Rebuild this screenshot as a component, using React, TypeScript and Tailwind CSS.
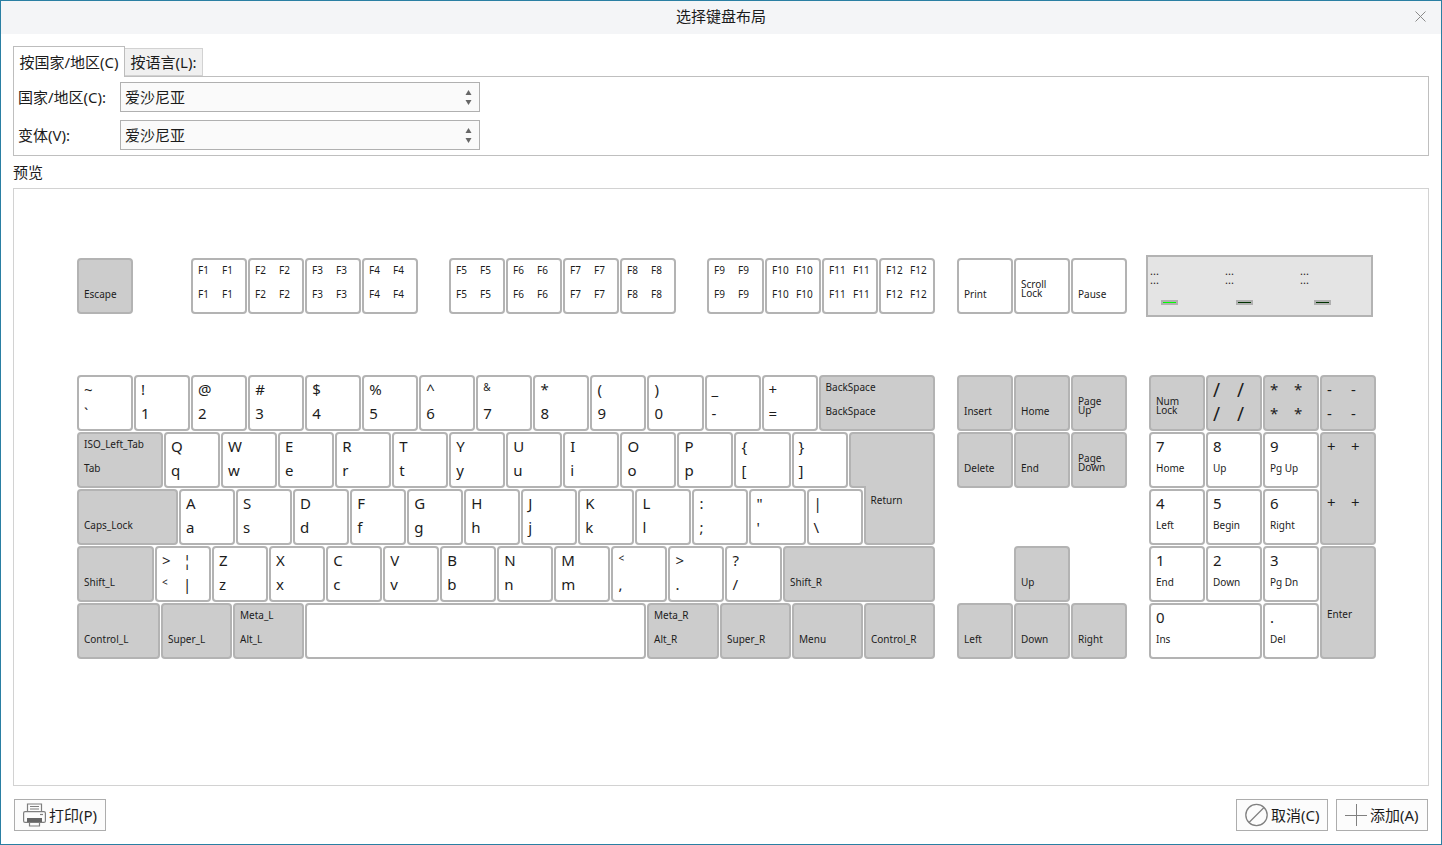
import React from "react";

type KeyProps = {
  w?: string;
  gray?: boolean;
  tl?: string;
  tr?: string;
  bl?: string;
  br?: string;
  big?: boolean;
  smallTl?: boolean;
  smallBl?: boolean;
  tall?: boolean;
  slash?: boolean;
  extra?: string;
};

const bigCls = "pt-[2px] text-[15px]";
const smallCls = "text-[10px]";

function Label({ t, big, slash }: { t?: string; big?: boolean; slash?: boolean }) {
  return (
    <span
      className={`block whitespace-nowrap leading-[24px] text-[#1c1c1c] ${
        slash ? "pt-[3px] text-[19px]" : big ? bigCls : smallCls
      }`}
    >
      {t}
    </span>
  );
}

function Key({ w = "w-[56px]", gray, tl, tr, bl, br, big, smallTl, smallBl, tall, slash, extra = "" }: KeyProps) {
  return (
    <div
      className={`${w} ${extra} shrink-0 rounded-[4px] border-2 border-[#b3b3b3] ${gray ? "bg-[#cccccc]" : "bg-white"} ${
        tall ? "h-full" : "h-[56px]"
      }`}
    >
      <div
        className={`-mt-[2px] grid grid-cols-[24px_1fr] pl-[5px] ${tall ? "grid-rows-[56px_24px]" : "grid-rows-[24px_24px]"}`}
      >
        <Label t={tl} big={big && !smallTl} slash={slash} />
        <Label t={tr} big={big && !smallTl} slash={slash} />
        <Label t={bl} big={big && !smallBl} slash={slash} />
        <Label t={br} big={big} slash={slash} />
      </div>
    </div>
  );
}

function Cap({ a, b, smallTop, w = "w-[56.06px]" }: { a: string; b: string; smallTop?: boolean; w?: string }) {
  return <Key w={w} big tl={a} bl={b} smallTl={smallTop} />;
}

function TwoLine({ a, b, w = "w-[56px]", gray = true }: { a: string; b: string; w?: string; gray?: boolean }) {
  return (
    <div className={`${w} h-[56px] shrink-0 rounded-[4px] border-2 border-[#b3b3b3] ${gray ? "bg-[#cccccc]" : "bg-white"}`}>
      <div className="pl-[5px] pt-[20px] text-[10px] leading-[9px] text-[#1c1c1c]">
        <div>{a}</div>
        <div>{b}</div>
      </div>
    </div>
  );
}

const F = ({ n, w }: { n: string; w?: string }) => <Key w={w} tl={n} tr={n} bl={n} br={n} />;

function LedCol({ w, led, ledGap }: { w: string; led: string; ledGap: string }) {
  return (
    <div className={`${w} shrink-0 pl-[2px] pt-[9px]`}>
      <div className="text-[11px] leading-[9px] text-[#1c1c1c]">...</div>
      <div className="text-[11px] leading-[9px] text-[#1c1c1c]">...</div>
      <div className={`mt-[16px] ${ledGap} flex h-[5px] w-[17px] items-center justify-center bg-[#b0b0b0]`}>
        <div className={`h-px w-[13px] ${led}`} />
      </div>
    </div>
  );
}

function Arrows() {
  return (
    <svg width="7" height="15" viewBox="0 0 7 15" className="shrink-0">
      <path d="M3.5 0 L6.5 5 L0.5 5 Z" fill="#666666" />
      <path d="M3.5 15 L6.5 10 L0.5 10 Z" fill="#666666" />
    </svg>
  );
}

function Select({ label }: { label: string }) {
  return (
    <div className="flex h-[30px] items-center">
      <div className="w-[106px] pl-[4px] text-[15px] text-[#1c1c1c]">{label}</div>
      <div className="flex h-[30px] w-[360px] items-center justify-between border border-[#b0b0b0] bg-[#fafafa] pl-[4px] pr-[7px] text-[15px] text-[#1c1c1c]">
        <span>爱沙尼亚</span>
        <Arrows />
      </div>
    </div>
  );
}

function Button({ w, icon, text, gap }: { w: string; icon: React.ReactNode; text: string; gap: string }) {
  return (
    <div className={`${w} flex h-[32px] items-center border border-[#adadad] bg-[#fcfcfc] pl-[8px] text-[15px] text-[#1c1c1c] ${gap}`}>
      {icon}
      <span>{text}</span>
    </div>
  );
}

const PrinterIcon = () => (
  <svg width="23" height="24" viewBox="0 0 23 24" fill="none" stroke="#7f7f7f" strokeWidth="1.2">
    <path d="M4.5 9 V1 H18.5 V9" />
    <path d="M7 3.5 H16 M7 6 H16" strokeWidth="1" />
    <rect x="0.6" y="8.6" width="21.8" height="10.8" rx="1.5" />
    <rect x="4" y="15" width="15" height="4" fill="#666666" stroke="none" />
    <path d="M6.5 19 V23 H16.5 V19" />
    <path d="M17 11.5 H20" />
  </svg>
);

const CancelIcon = () => (
  <svg width="23" height="24" viewBox="0 0 23 24" fill="none" stroke="#808080" strokeWidth="1.3">
    <circle cx="11.5" cy="12" r="10.7" />
    <path d="M4 19.5 L19 4.5" />
  </svg>
);

const PlusIcon = () => (
  <svg width="22" height="22" viewBox="0 0 22 22" fill="none" stroke="#808080" strokeWidth="1">
    <path d="M0 11.5 H22 M11.5 0 V22" />
  </svg>
);

function NumKey({ a, b, w = "w-[56px]" }: { a: string; b: string; w?: string }) {
  return (
    <div className={`${w} h-[56px] shrink-0 rounded-[4px] border-2 border-[#b3b3b3] bg-white`}>
      <div className="-mt-[2px] grid grid-cols-[24px_1fr] grid-rows-[24px_24px] pl-[5px]">
        <Label t={a} big />
        <span />
        <Label t={b} />
      </div>
    </div>
  );
}

export default function App() {
  return (
    <div className="flex h-[845px] w-[1442px] flex-col border border-[#2a7fa3] bg-white font-['Noto_Sans','Noto_Sans_CJK_SC',sans-serif]">
      {/* title bar */}
      <div className="relative flex h-[33px] shrink-0 items-center justify-center bg-[#f4f5f7] pb-[2px] text-[15px] text-[#1c1c1c]">
        <span>选择键盘布局</span>
        <svg width="11" height="11" viewBox="0 0 11 11" className="absolute right-[15px] top-[10px]" stroke="#8a8a8a" strokeWidth="1">
          <path d="M0.5 0.5 L10.5 10.5 M10.5 0.5 L0.5 10.5" />
        </svg>
      </div>

      <div className="flex min-h-0 flex-1 flex-col pb-[13px] pl-[12px] pr-[12px] pt-[12px]">
        {/* tabs */}
        <div className="relative z-10 flex h-[31px] shrink-0 items-start text-[15px] text-[#1c1c1c]">
          <div className="flex h-[31px] w-[112px] items-center justify-center border border-b-0 border-[#bdbdbd] bg-white">
            按国家/地区(C)
          </div>
          <div className="mt-[2px] flex h-[28px] w-[78px] items-center justify-center border border-l-0 border-[#d2d2d2] bg-[#f0f0f0] pt-[1px]">
            按语言(L):
          </div>
        </div>
        <div className="-mt-px flex h-[80px] shrink-0 flex-col gap-[8px] border border-[#bfbfbf] pt-[5px]">
          <Select label="国家/地区(C):" />
          <Select label="变体(V):" />
        </div>

        <div className="flex h-[32px] shrink-0 items-center text-[15px] text-[#1c1c1c]">预览</div>

        {/* preview */}
        <div className="min-h-0 flex-1 border border-[#d2d2d2] pl-[63px] pt-[66px]">
          {/* top row */}
          <div className="flex items-start">
            <Key gray bl="Escape" extra="mt-[3px] mr-[58px]" />
            <div className="mr-[31px] mt-[3px] flex gap-px">
              <F n="F1" /><F n="F2" /><F n="F3" /><F n="F4" />
            </div>
            <div className="mr-[31px] mt-[3px] flex gap-px">
              <F n="F5" /><F n="F6" /><F n="F7" /><F n="F8" />
            </div>
            <div className="mr-[22px] mt-[3px] flex gap-px">
              <F n="F9" w="w-[57px]" /><F n="F10" /><F n="F11" /><F n="F12" />
            </div>
            <div className="mr-[19px] mt-[3px] flex gap-px">
              <Key bl="Print" />
              <TwoLine a="Scroll" b="Lock" gray={false} />
              <Key bl="Pause" />
            </div>
            <div className="flex h-[62px] w-[227px] border-2 border-[#b3b3b3] bg-[#e4e4e4]">
              <LedCol w="w-[75px]" led="bg-[#00ff00]" ledGap="ml-[11px]" />
              <LedCol w="w-[75px]" led="bg-[#003300]" ledGap="ml-[11px]" />
              <LedCol w="w-[73px]" led="bg-[#003300]" ledGap="ml-[14px]" />
            </div>
          </div>

          {/* lower block */}
          <div className="mt-[58px] flex items-start gap-[22px]">
            {/* main */}
            <div className="flex w-[858px] flex-col gap-px">
              <div className="flex gap-px">
                <Cap a="~" b="`" /><Cap a="!" b="1" /><Cap a="@" b="2" /><Cap a="#" b="3" /><Cap a="$" b="4" />
                <Cap a="%" b="5" /><Cap a="^" b="6" /><Cap a="&" b="7" smallTop /><Cap a="*" b="8" /><Cap a="(" b="9" />
                <Cap a=")" b="0" /><Cap a="_" b="-" /><Cap a="+" b="=" />
                <Key gray w="flex-1 min-w-0" tl="BackSpace" bl="BackSpace" />
              </div>
              <div className="flex gap-px">
                <Key gray w="w-[86px]" tl="ISO_Left_Tab" bl="Tab" />
                <Cap a="Q" b="q" /><Cap a="W" b="w" /><Cap a="E" b="e" /><Cap a="R" b="r" /><Cap a="T" b="t" />
                <Cap a="Y" b="y" /><Cap a="U" b="u" /><Cap a="I" b="i" /><Cap a="O" b="o" /><Cap a="P" b="p" />
                <Cap a="{" b="[" /><Cap a="}" b="]" />
                <div className="h-[56px] min-w-0 flex-1 rounded-[4px] rounded-br-none border-2 border-[#b3b3b3] bg-[#cccccc]" />
              </div>
              <div className="flex gap-px">
                <Key gray w="w-[101px]" bl="Caps_Lock" />
                <Cap a="A" b="a" /><Cap a="S" b="s" /><Cap a="D" b="d" /><Cap a="F" b="f" /><Cap a="G" b="g" />
                <Cap a="H" b="h" /><Cap a="J" b="j" /><Cap a="K" b="k" /><Cap a="L" b="l" /><Cap a=":" b=";" />
                <Cap a={'"'} b="'" /><Cap a="|" b="\" />
                <div className="relative -mt-[3px] h-[59px] min-w-0 flex-1 rounded-b-[4px] border-2 border-t-0 border-[#b3b3b3] bg-[#cccccc] pl-[5px] pt-[2px] text-[10px] leading-[24px] text-[#1c1c1c]">
                  Return
                </div>
              </div>
              <div className="flex gap-px">
                <Key gray w="w-[77px]" bl="Shift_L" />
                <div className="h-[56px] w-[56.06px] shrink-0 rounded-[4px] border-2 border-[#b3b3b3] bg-white">
                  <div className="-mt-[2px] grid grid-cols-[24px_1fr] grid-rows-[24px_24px] pl-[5px]">
                    <Label t=">" big />
                    <div className="-ml-[3px]">
                      <Label t="¦" big />
                    </div>
                    <Label t="<" />
                    <div className="-ml-[3px]">
                      <Label t="|" big />
                    </div>
                  </div>
                </div>
                <Cap a="Z" b="z" /><Cap a="X" b="x" /><Cap a="C" b="c" /><Cap a="V" b="v" /><Cap a="B" b="b" />
                <Cap a="N" b="n" /><Cap a="M" b="m" /><Cap a="<" b="," smallTop /><Cap a=">" b="." /><Cap a="?" b="/" />
                <Key gray w="flex-1 min-w-0 ml-[0.5px]" bl="Shift_R" />
              </div>
              <div className="flex gap-px">
                <Key gray w="w-[83px]" bl="Control_L" />
                <Key gray w="w-[71px]" bl="Super_L" />
                <Key gray w="w-[71px]" tl="Meta_L" bl="Alt_L" />
                <Key w="w-[341px]" />
                <Key gray w="w-[72px]" tl="Meta_R" bl="Alt_R" />
                <Key gray w="w-[71px]" bl="Super_R" />
                <Key gray w="w-[71px]" bl="Menu" />
                <Key gray w="flex-1 min-w-0" bl="Control_R" />
              </div>
            </div>

            {/* navigation */}
            <div className="grid grid-cols-[repeat(3,56px)] grid-rows-[repeat(5,56px)] gap-px">
              <Key gray bl="Insert" />
              <Key gray bl="Home" />
              <TwoLine a="Page" b="Up" />
              <Key gray bl="Delete" />
              <Key gray bl="End" />
              <TwoLine a="Page" b="Down" />
              <div className="col-start-2 row-start-4">
                <Key gray bl="Up" />
              </div>
              <div className="row-start-5">
                <Key gray bl="Left" />
              </div>
              <div className="row-start-5">
                <Key gray bl="Down" />
              </div>
              <div className="row-start-5">
                <Key gray bl="Right" />
              </div>
            </div>

            {/* numpad */}
            <div className="grid grid-cols-[repeat(4,56px)] grid-rows-[repeat(5,56px)] gap-px">
              <TwoLine a="Num" b="Lock" />
              <Key gray big slash tl="/" tr="/" bl="/" br="/" />
              <Key gray big tl="*" tr="*" bl="*" br="*" />
              <Key gray big tl="-" tr="-" bl="-" br="-" />
              <NumKey a="7" b="Home" />
              <NumKey a="8" b="Up" />
              <NumKey a="9" b="Pg Up" />
              <div className="row-span-2 h-[113px]">
                <Key gray big tall w="w-[56px]" tl="+" tr="+" bl="+" br="+" />
              </div>
              <NumKey a="4" b="Left" />
              <NumKey a="5" b="Begin" />
              <NumKey a="6" b="Right" />
              <NumKey a="1" b="End" />
              <NumKey a="2" b="Down" />
              <NumKey a="3" b="Pg Dn" />
              <div className="row-span-2 h-[113px]">
                <Key gray tall w="w-[56px]" bl="Enter" />
              </div>
              <div className="col-span-2">
                <NumKey a="0" b="Ins" w="w-[113px]" />
              </div>
              <NumKey a="." b="Del" />
            </div>
          </div>
        </div>

        {/* footer */}
        <div className="mt-[13px] flex h-[32px] shrink-0 items-start justify-between pl-px pr-px">
          <Button w="w-[92px]" gap="gap-[3px]" icon={<PrinterIcon />} text="打印(P)" />
          <div className="flex gap-[8px]">
            <Button w="w-[92px]" gap="gap-[3px]" icon={<CancelIcon />} text="取消(C)" />
            <Button w="w-[92px]" gap="gap-[3px]" icon={<PlusIcon />} text="添加(A)" />
          </div>
        </div>
      </div>
    </div>
  );
}
